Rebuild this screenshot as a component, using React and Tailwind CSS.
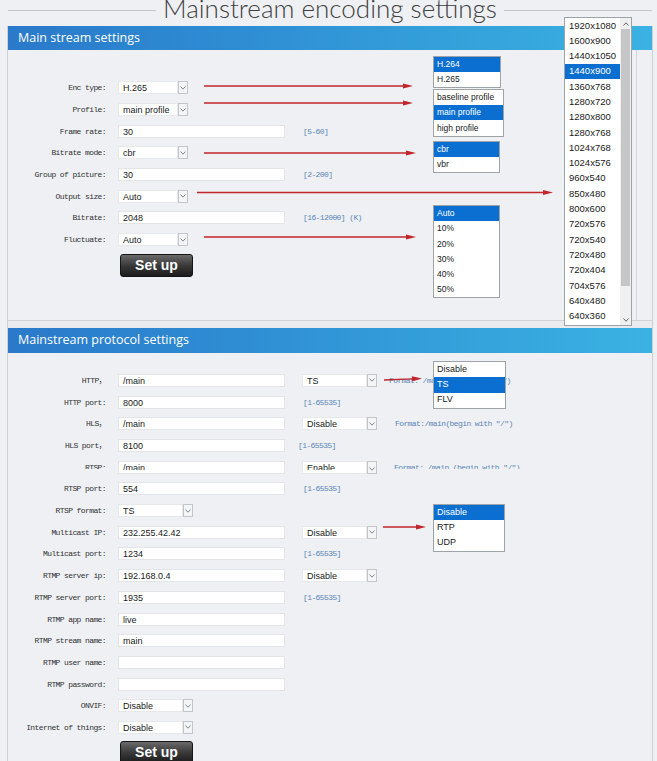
import React from "react";

const LBL =
  "font-['Liberation_Mono','Noto_Sans_CJK_SC',monospace] text-[8px] tracking-[-0.6px] text-[#333]";
const HINT =
  "font-['Liberation_Mono','Noto_Sans_CJK_SC',monospace] text-[8px] tracking-[-0.6px] text-[#5c87b8]";
const SANS = "font-['Liberation_Sans',Arial,sans-serif]";

function T({ clip, children }) {
  return (
    <span
      className={
        clip
          ? "block h-[8px] overflow-hidden leading-[13px] whitespace-pre"
          : "block leading-[13px] whitespace-pre"
      }
    >
      {children}
    </span>
  );
}

function Chevron() {
  return (
    <svg width="6" height="4" viewBox="0 0 6 4">
      <polyline points="0.5,0.5 3,3.2 5.5,0.5" fill="none" stroke="#7a7a7a" strokeWidth="0.9" />
    </svg>
  );
}

function Input({ value, clip }) {
  return (
    <div
      className={`w-[167px] h-[13px] bg-white border border-[#e2e4e7] flex items-start pl-[4px] text-[9px] text-[#1a1a1a] ${SANS}`}
    >
      <T clip={clip}>{value}</T>
    </div>
  );
}

function Select({ value, wide, clip }) {
  return (
    <div className="flex h-[13px]">
      <div
        className={`${wide ? "w-[65px]" : "w-[60px]"} h-[13px] bg-white border border-[#e6e8ea] flex items-start pl-[4px] text-[9px] text-[#1a1a1a] ${SANS}`}
      >
        <T clip={clip}>{value}</T>
      </div>
      <div className="w-[10px] h-[13px] border border-[#c3c5c8] bg-[#f4f5f6] flex items-center justify-center">
        {clip ? (
          <div className="h-[8px] overflow-hidden flex items-end">
            <Chevron />
          </div>
        ) : (
          <Chevron />
        )}
      </div>
    </div>
  );
}

function Hint({ text, ml, clip }) {
  return (
    <div className={`${ml} h-[13px] flex items-start ${HINT}`}>
      <T clip={clip}>{text}</T>
    </div>
  );
}

function Row({ label, clip, children }) {
  return (
    <div className="flex items-center h-[21.7px]">
      <div className={`w-[98px] h-[13px] flex items-start justify-end ${LBL}`}>
        <T clip={clip}>{label}</T>
      </div>
      <div className="ml-[12px] flex items-center">{children}</div>
    </div>
  );
}

function Button() {
  return (
    <div
      className={`w-[73px] h-[23px] rounded-[3px] border border-[#151515] bg-linear-to-b from-[#6a6a6a] via-[#3a3a3a] to-[#1c1c1c] flex items-center justify-center text-white font-bold text-[14px] ${SANS}`}
    >
      Set up
    </div>
  );
}

function Header({ title, h }) {
  return (
    <div
      className={`relative ${h} bg-linear-to-r from-[#2a79ca] to-[#3ab2e2] flex items-center pl-[10px] text-white text-[12.5px] font-['Open_Sans',sans-serif]`}
    >
      {title}
      <div className="absolute left-[32px] top-full w-0 h-0 border-x-[5px] border-x-transparent border-t-[4px] border-t-[#2b7bcb]" />
    </div>
  );
}

function List({ items, sel, cls, itemH = "h-[15.2px]", text = "text-[8.5px]" }) {
  return (
    <div className={`absolute bg-white border border-[#9ea3a8] ${cls}`}>
      {items.map((it, i) => (
        <div
          key={it}
          className={`${itemH} flex items-center pl-[3px] ${text} ${SANS} ${
            i === sel ? "bg-[#0b6fd2] text-white" : "text-[#1a1a1a]"
          }`}
        >
          {it}
        </div>
      ))}
    </div>
  );
}

const RES = [
  "1920x1080",
  "1600x900",
  "1440x1050",
  "1440x900",
  "1360x768",
  "1280x720",
  "1280x800",
  "1280x768",
  "1024x768",
  "1024x576",
  "960x540",
  "850x480",
  "800x600",
  "720x576",
  "720x540",
  "720x480",
  "720x404",
  "704x576",
  "640x480",
  "640x360",
];

function Arrow({ x1, y1, x2, y2 }) {
  const ang = Math.atan2(y2 - y1, x2 - x1);
  const L = 10;
  const W = 2.6;
  const bx = x2 - L * Math.cos(ang);
  const by = y2 - L * Math.sin(ang);
  const px = -Math.sin(ang) * W;
  const py = Math.cos(ang) * W;
  return (
    <g>
      <line x1={x1} y1={y1} x2={bx} y2={by} stroke="#c0262c" strokeWidth="1.3" />
      <polygon
        points={`${x2},${y2} ${bx + px},${by + py} ${bx - px},${by - py}`}
        fill="#c0262c"
      />
    </g>
  );
}

export default function App() {
  return (
    <div className="relative w-[657px] h-[761px] overflow-hidden bg-[#eef0f3]">
      {/* Title */}
      <div className="flex items-start h-[26px] ml-[8px] w-[644px]">
        <div className="flex-1 h-px bg-[#c2c4c7] mt-[10px]" />
        <span className="mx-[7px] text-[26px] leading-[17px] font-light text-[#404040] font-['Lato',sans-serif] whitespace-nowrap">
          Mainstream encoding settings
        </span>
        <div className="flex-1 h-px bg-[#c2c4c7] mt-[10px]" />
      </div>

      <div className="ml-[7px] w-[646px] border-x border-[#cdd0d4]">
        {/* Panel 1 */}
        <Header title="Main stream settings" h="h-[24px]" />
        <div className="relative h-[271px] bg-[#eef0f3] border-b border-[#d0d3d7] pt-[27px]">
          <div className="absolute right-[15px] top-0 bottom-0 w-px bg-[#d5d8db]" />
          <Row label="Enc type:">
            <Select value="H.265" />
          </Row>
          <Row label="Profile:">
            <Select value="main profile" />
          </Row>
          <Row label="Frame rate:">
            <Input value="30" />
            <Hint text="[5-60]" ml="ml-[18px]" />
          </Row>
          <Row label="Bitrate mode:">
            <Select value="cbr" />
          </Row>
          <Row label="Group of picture:">
            <Input value="30" />
            <Hint text="[2-200]" ml="ml-[18px]" />
          </Row>
          <Row label="Output size:">
            <Select value="Auto" />
          </Row>
          <Row label="Bitrate:">
            <Input value="2048" />
            <Hint text="[16-12000] (K)" ml="ml-[18px]" />
          </Row>
          <Row label="Fluctuate:">
            <Select value="Auto" />
          </Row>
          <div className="ml-[112px] mt-[3.5px]">
            <Button />
          </div>
        </div>

        <div className="h-[7px] bg-[#e9ebee]" />

        {/* Panel 2 */}
        <Header title="Mainstream protocol settings" h="h-[25px]" />
        <div className="relative bg-[#eef0f3] pt-[16.6px] h-[420px]">
          <Row label="HTTP，">
            <Input value="/main" />
            <div className="ml-[17px]">
              <Select value="TS" wide />
            </div>
            <Hint text={'Format: /main(begin with "/")'} ml="ml-[12px]" />
          </Row>
          <Row label="HTTP port:">
            <Input value="8000" />
            <Hint text="[1-65535]" ml="ml-[18px]" />
          </Row>
          <Row label="HLS，">
            <Input value="/main" />
            <div className="ml-[17px]">
              <Select value="Disable" wide />
            </div>
            <Hint text={'Format:/main(begin with "/")'} ml="ml-[18px]" />
          </Row>
          <Row label="HLS port，">
            <Input value="8100" />
            <Hint text="[1-65535]" ml="ml-[13px]" />
          </Row>
          <Row label="RTSP:" clip>
            <Input value="/main" clip />
            <div className="ml-[17px]">
              <Select value="Enable" wide clip />
            </div>
            <Hint text={'Format: /main (begin with "/")'} ml="ml-[17px]" clip />
          </Row>
          <Row label="RTSP port:">
            <Input value="554" />
            <Hint text="[1-65535]" ml="ml-[18px]" />
          </Row>
          <Row label="RTSP format:">
            <Select value="TS" wide />
          </Row>
          <Row label="Multicast IP:">
            <Input value="232.255.42.42" />
            <div className="ml-[17px]">
              <Select value="Disable" wide />
            </div>
          </Row>
          <Row label="Multicast port:">
            <Input value="1234" />
            <Hint text="[1-65535]" ml="ml-[18px]" />
          </Row>
          <Row label="RTMP server ip:">
            <Input value="192.168.0.4" />
            <div className="ml-[17px]">
              <Select value="Disable" wide />
            </div>
          </Row>
          <Row label="RTMP server port:">
            <Input value="1935" />
            <Hint text="[1-65535]" ml="ml-[18px]" />
          </Row>
          <Row label="RTMP app name:">
            <Input value="live" />
          </Row>
          <Row label="RTMP stream name:">
            <Input value="main" />
          </Row>
          <Row label="RTMP user name:">
            <Input value="" />
          </Row>
          <Row label="RTMP password:">
            <Input value="" />
          </Row>
          <Row label="ONVIF:">
            <Select value="Disable" wide />
          </Row>
          <Row label="Internet of things:">
            <Select value="Disable" wide />
          </Row>
          <div className="ml-[112px] mt-[2.5px]">
            <Button />
          </div>
        </div>
      </div>

      {/* Dropdown lists */}
      <List items={["H.264", "H.265"]} sel={0} cls="left-[433px] top-[56px] w-[68px]" />
      <List
        items={["baseline profile", "main profile", "high profile"]}
        sel={1}
        cls="left-[433px] top-[89px] w-[71px]"
      />
      <List items={["cbr", "vbr"]} sel={0} cls="left-[433px] top-[141px] w-[67px]" />
      <List
        items={["Auto", "10%", "20%", "30%", "40%", "50%"]}
        sel={0}
        cls="left-[433px] top-[205px] w-[67px]"
      />
      <List
        items={["Disable", "TS", "FLV"]}
        sel={1}
        cls="left-[433px] top-[361px] w-[73px]"
        itemH="h-[15.3px]"
        text="text-[9px]"
      />
      <List
        items={["Disable", "RTP", "UDP"]}
        sel={0}
        cls="left-[433px] top-[504px] w-[72px]"
        itemH="h-[15.3px]"
        text="text-[9px]"
      />

      {/* Resolution list with scrollbar */}
      <div className="absolute left-[564px] top-[17px] w-[68px] h-[309px] bg-white border border-[#9ea3a8] flex">
        <div className="flex-1">
          {RES.map((r, i) => (
            <div
              key={r}
              className={`h-[15.3px] flex items-center pl-[4px] text-[9.5px] ${SANS} ${
                i === 3 ? "bg-[#0b6fd2] text-white" : "text-[#1a1a1a]"
              }`}
            >
              {r}
            </div>
          ))}
        </div>
        <div className="w-[11px] bg-[#f0f0f0] flex flex-col items-center">
          <div className="h-[11px] flex items-center justify-center">
            <svg width="6" height="4" viewBox="0 0 6 4">
              <polyline points="0.5,3.5 3,0.8 5.5,3.5" fill="none" stroke="#555" strokeWidth="0.9" />
            </svg>
          </div>
          <div className="w-[9px] h-[257px] bg-[#c6c6c6]" />
          <div className="flex-1" />
          <div className="h-[11px] flex items-center justify-center">
            <svg width="6" height="4" viewBox="0 0 6 4">
              <polyline points="0.5,0.5 3,3.2 5.5,0.5" fill="none" stroke="#555" strokeWidth="0.9" />
            </svg>
          </div>
        </div>
      </div>

      {/* Arrows */}
      <svg className="absolute inset-0 pointer-events-none" width="657" height="761">
        <Arrow x1={204} y1={86} x2={413} y2={86} />
        <Arrow x1={204} y1={103} x2={413} y2={103} />
        <Arrow x1={204} y1={153} x2={416} y2={153} />
        <Arrow x1={197} y1={192.5} x2={553} y2={192.5} />
        <Arrow x1={204} y1={237} x2={416} y2={237} />
        <Arrow x1={384} y1={380} x2={422} y2={378.5} />
        <Arrow x1={383} y1={527} x2={426} y2={527} />
      </svg>
    </div>
  );
}
